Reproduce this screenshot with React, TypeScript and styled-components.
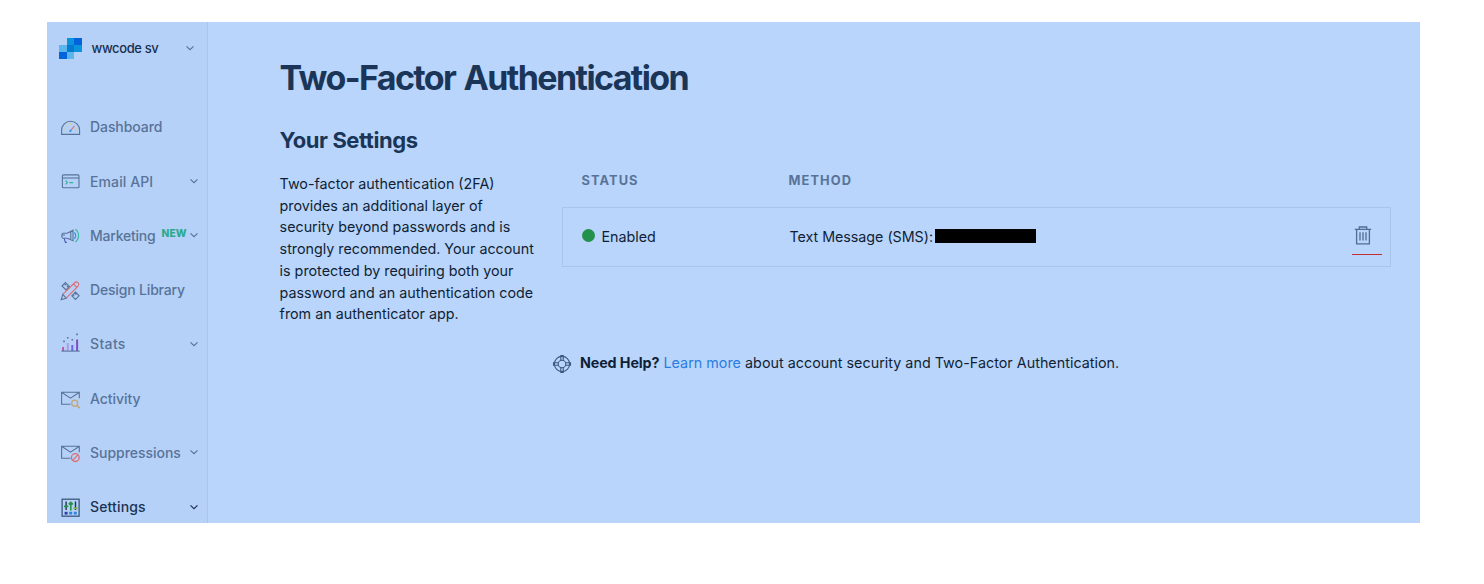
import React from "react";
import styled, { createGlobalStyle } from "styled-components";

const GlobalStyle = createGlobalStyle`
  * { box-sizing: border-box; }
  body { margin: 0; background: #fff; font-family: Inter, "Liberation Sans", sans-serif; }
  h1, h2, p { margin: 0; }
`;

const Page = styled.div`
  width: 1484px;
  height: 584px;
  padding: 22px 64px 61px 47px;
  overflow: hidden;
`;
const Shell = styled.div`
  display: flex;
  height: 501px;
  background: #b9d5fb;
`;
const Sidebar = styled.aside`
  flex: none;
  width: 161px;
  height: 100%;
  overflow: hidden;
  background: #b5d1f7;
  border-right: 1px solid #a8c5ee;
`;
const Account = styled.div`
  display: flex;
  align-items: center;
  height: 52px;
  padding-left: 12px;
  color: #1a2f50;
  svg { flex: none; }
`;
const AccountName = styled.span`
  width: 93.5px;
  margin-left: 9.5px;
  font-size: 13px;
  font-weight: 500;
  letter-spacing: -0.38px;
`;
const Nav = styled.nav`
  display: flex;
  flex-direction: column;
  padding-top: 25.8px;
`;
const NavItem = styled.div<{ $active?: boolean }>`
  display: flex;
  flex: none;
  align-items: center;
  height: 54.25px;
  padding-left: 13px;
  color: ${(p) => (p.$active ? "#1b3354" : "#587399")};
`;
const IconSlot = styled.span`
  display: flex;
  flex: none;
  width: 22px;
  margin-right: 8px;
  padding-top: 3px;
`;
const NavLabel = styled.span<{ $spacing: number }>`
  display: flex;
  flex: none;
  width: 99px;
  font-size: 14px;
  font-weight: 500;
  letter-spacing: ${(p) => p.$spacing}px;
  white-space: nowrap;
`;
const NewTag = styled.sup`
  margin: -0.5px 0 0 6px;
  color: #2fa98c;
  font-size: 10.2px;
  font-weight: 800;
  line-height: 15px;
  letter-spacing: 0.1px;
`;
const Main = styled.main`
  flex: 1;
  padding: 33px 29px 0 71.6px;
`;
const Title = styled.h1`
  color: #1a3558;
  font-size: 34px;
  font-weight: 700;
  line-height: 46px;
  letter-spacing: -1.6px;
  word-spacing: 1.7px;
`;
const Columns = styled.div`
  display: flex;
  margin-top: 21px;
`;
const Intro = styled.section`
  flex: none;
  width: 282.4px;
`;
const Subtitle = styled.h2`
  color: #1a3558;
  font-size: 22px;
  font-weight: 700;
  line-height: 36px;
  letter-spacing: -0.45px;
`;
const Description = styled.p`
  margin-top: 15px;
  color: #101f36;
  font-size: 14.3px;
  line-height: 21.7px;
  white-space: nowrap;
`;
const Methods = styled.section`
  flex: 1;
  padding-top: 48px;
`;
const HeaderRow = styled.div`
  display: grid;
  grid-template-columns: 207px 1fr;
  height: 37px;
  padding-left: 19.5px;
  color: #587399;
  font-size: 12.8px;
  font-weight: 700;
  line-height: 21px;
  letter-spacing: 1.1px;
`;
const MethodRow = styled.div`
  display: grid;
  grid-template-columns: 207px 1fr 30px;
  align-items: center;
  height: 60px;
  padding: 0 8px 2px 19.4px;
  border: 1px solid #a8c5ee;
  color: #101f36;
  font-size: 14.3px;
`;
const Status = styled.span`
  display: flex;
  align-items: center;
  gap: 6px;
`;
const Dot = styled.i`
  width: 13px;
  height: 13px;
  margin-top: -2px;
  border-radius: 50%;
  background: #23904c;
`;
const Method = styled.span`
  display: flex;
  align-items: center;
  letter-spacing: -0.03px;
`;
const Redacted = styled.span`
  width: 101px;
  height: 14px;
  margin: 0 0 0 2.4px;
  background: #000;
`;
const DeleteButton = styled.span`
  display: flex;
  justify-content: center;
  height: 30px;
  margin-top: 7px;
  padding: 1px 9px 0 0;
  border-bottom: 1px solid #c22f38;
`;
const Help = styled.p`
  display: flex;
  align-items: center;
  margin: 27px 0 0 273.2px;
  color: #101f36;
  font-size: 14.3px;
  line-height: 22px;
  letter-spacing: 0.03px;
  white-space: pre;
  svg { margin: 2px 8.2px 0 -1px; }
  b { font-weight: 700; letter-spacing: -0.1px; }
`;
const Link = styled.span`
  color: #2a7de1;
`;

const ink = "#587399";

function Chevron({ color = ink }: { color?: string }) {
  return (
    <svg width="10" height="10" viewBox="0 0 10 10" fill="none" stroke={color} strokeWidth="1.2">
      <path d="M1.5 3.4 5 6.6 8.5 3.4" />
    </svg>
  );
}

function Logo() {
  return (
    <svg width="23" height="22" viewBox="0 0 23 22" shapeRendering="crispEdges">
      <path fill="#0b93dd" d="M8 1h7v7H8zM15 8h8v7h-8z" />
      <path fill="#0263dc" d="M15 1h8v7h-8zM0 15h8v7H0z" />
      <path fill="#5bb6ee" d="M0 8h8v7H0zM8 15h7v7H8z" />
      <path fill="#057bcf" d="M8 8h7v7H8z" />
    </svg>
  );
}

const Icon = ({ children, color = ink }: { children: React.ReactNode; color?: string }) => (
  <svg width="21" height="21" viewBox="0 0 21 21" fill="none" stroke={color} strokeWidth="1.1" overflow="visible">
    {children}
  </svg>
);

const DashboardIcon = () => (
  <Icon>
    <path d="M1.6 16.4v-4.2a9 9 0 0 1 18 0v4.2z" />
    <path d="M10.6 5v1.5M6.4 6.8l.8.8M4.4 11h1.4M15.4 11h1.4M4.8 13.5h1M15.5 13.5h1" stroke="#d9c86f" />
    <path d="m10.5 12.7 4-4.7" stroke="#df6c6e" />
    <circle cx="10.4" cy="13" r=".9" fill="#3991e8" stroke="#3991e8" strokeWidth=".5" />
  </Icon>
);
const TerminalIcon = () => (
  <Icon>
    <rect x="2.4" y="2.9" width="16.6" height="12.8" rx="1" />
    <path d="M2.4 6h16.6" />
    <path d="m5.5 8.5 2 1.9-2 1.9M9.5 10.6H13" stroke="#35b197" />
  </Icon>
);
const MegaphoneIcon = () => (
  <Icon>
    <path d="M13 4.2v10.4L7.2 12.3H3.1c-1.7 0-1.7-5 0-5h4.1zM2 9h3M10.8 5v8.7" />
    <path d="m4.2 12.4 1.2 4h1.4" stroke="#4658ba" />
    <path d="M14.2 6.5c2 1.5 2 4.7 0 6.2" stroke="#308de2" />
    <path d="M15.3 3.2c4.5 3 4.2 9.6.1 13" stroke="#38b9a3" />
  </Icon>
);
const DesignIcon = () => (
  <Icon>
    <path d="m2 5 3.4-3.4 4 4-3.4 3.4zM6.4 2.6 4.7 4.3M8.4 4.6 7 6M11.8 14.8l3.7-3.7 3.6 3.7-3.6 3.7zM14.7 12l1.5 1.5M12.8 13.8l1.4 1.4" />
    <path d="m2.8 13.4 3.4 3.8-5 1.4z" />
    <path d="M2.8 13.4 14.9 1.5c2-1.7 5 .9 3.4 3.3L6.2 17.2M13.5 3l3.4 3.4" stroke="#dc6c70" />
  </Icon>
);
const StatsIcon = () => (
  <Icon>
    <path d="M3.1 16v-4" stroke="#b759a7" strokeWidth="2" />
    <path d="M7.8 16V8" stroke="#ad9bea" strokeWidth="2" />
    <path d="M12.3 16v-6" stroke="#6b67ed" strokeWidth="2" />
    <path d="M17.1 16V4.5" stroke="#7d4fbe" strokeWidth="2" />
    <path d="M1.4 16.1h18.3" />
    <path d="M3.2 6.4h1.6M6.9 2.8h1.6M11.5 4.7h1.6M16.2-.6h1.6" strokeWidth="1.6" />
  </Icon>
);
const Envelope = () => <path d="M10.5 15.2H1.6V3.2h17.7v6M1.9 3.5l8.6 5.6 8.5-5.6" />;
const ActivityIcon = () => (
  <Icon>
    <Envelope />
    <circle cx="14.7" cy="14.2" r="3" stroke="#c5a676" strokeWidth="1.3" />
    <path d="m17 16.4 2.7 2.7" stroke="#c5a676" strokeWidth="1.5" />
  </Icon>
);
const SuppressionsIcon = () => (
  <Icon>
    <Envelope />
    <circle cx="15.3" cy="14.6" r="3.9" stroke="#dc6c70" strokeWidth="1.3" />
    <path d="m12.6 17.3 5.4-5.4" stroke="#dc6c70" strokeWidth="1.2" />
  </Icon>
);
const SettingsIcon = () => (
  <Icon color="#3d587d">
    <rect x="2.1" y="1.2" width="17" height="17" strokeWidth="1.3" />
    <path d="M6.1 3.6v8.4M15.5 3.6v8.4" stroke="#1b3354" strokeWidth="1.4" />
    <path d="M10.8 4.5v8M4 8.4h4.3M8.7 6.4l2.1-2 2.1 2" stroke="#269349" strokeWidth="1.6" />
    <path d="M13.3 10.3h4.4" stroke="#8ab640" strokeWidth="1.7" />
    <path d="M4.6 15.2h3" stroke="#303fa7" strokeWidth="2.8" />
    <path d="M9.2 15.2h3M13.8 15.2h3" stroke="#3183dc" strokeWidth="2.8" />
  </Icon>
);
const TrashIcon = () => (
  <svg width="18" height="20" viewBox="0 0 18 20" fill="none" stroke="#526d92" strokeWidth="1.3">
    <path d="M.8 3.4h16.4M5.3 3.3V1h7.4v2.3M2.6 3.5v14.3h12.8V3.5M6 6.2v8.4M9 6.2v8.4M12 6.2v8.4" />
  </svg>
);
const HelpIcon = () => (
  <svg width="20" height="20" viewBox="0 0 20 20" fill="none" stroke="#3d587d" strokeWidth="1.1">
    <circle cx="10" cy="10" r="7.6" />
    <circle cx="10" cy="10" r="3.8" />
    <path d="M8.8 6.3V1.5h2.4v4.8M8.8 13.7v4.8h2.4v-4.8M6.3 8.8H1.5v2.4h4.8M13.7 8.8h4.8v2.4h-4.8" />
  </svg>
);

const items = [
  { label: "Dashboard", icon: <DashboardIcon />, spacing: -0.08 },
  { label: "Email API", icon: <TerminalIcon />, spacing: 0.1, menu: true },
  { label: "Marketing", icon: <MegaphoneIcon />, spacing: -0.22, menu: true, isNew: true },
  { label: "Design Library", icon: <DesignIcon />, spacing: -0.17 },
  { label: "Stats", icon: <StatsIcon />, spacing: 0.35, menu: true },
  { label: "Activity", icon: <ActivityIcon />, spacing: -0.05 },
  { label: "Suppressions", icon: <SuppressionsIcon />, spacing: -0.03, menu: true },
  { label: "Settings", icon: <SettingsIcon />, spacing: 0.15, menu: true, active: true },
];

const description = [
  "Two-factor authentication (2FA)",
  "provides an additional layer of",
  "security beyond passwords and is",
  "strongly recommended. Your account",
  "is protected by requiring both your",
  "password and an authentication code",
  "from an authenticator app.",
];

export default function App() {
  return (
    <Page>
      <GlobalStyle />
      <Shell>
        <Sidebar>
          <Account>
            <Logo />
            <AccountName>wwcode sv</AccountName>
            <Chevron />
          </Account>
          <Nav>
            {items.map((item) => (
              <NavItem key={item.label} $active={item.active}>
                <IconSlot>{item.icon}</IconSlot>
                <NavLabel $spacing={item.spacing}>
                  {item.label}
                  {item.isNew && <NewTag>NEW</NewTag>}
                </NavLabel>
                {item.menu && <Chevron color={item.active ? "#1b3354" : ink} />}
              </NavItem>
            ))}
          </Nav>
        </Sidebar>
        <Main>
          <Title>Two-Factor Authentication</Title>
          <Columns>
            <Intro>
              <Subtitle>Your Settings</Subtitle>
              <Description>
                {description.map((line) => (
                  <React.Fragment key={line}>
                    {line}
                    <br />
                  </React.Fragment>
                ))}
              </Description>
            </Intro>
            <Methods>
              <HeaderRow>
                <span>STATUS</span>
                <span>METHOD</span>
              </HeaderRow>
              <MethodRow>
                <Status>
                  <Dot />
                  Enabled
                </Status>
                <Method>
                  Text Message (SMS):
                  <Redacted />
                </Method>
                <DeleteButton>
                  <TrashIcon />
                </DeleteButton>
              </MethodRow>
            </Methods>
          </Columns>
          <Help>
            <HelpIcon />
            <span>
              <b>Need Help?</b> <Link>Learn more</Link> about account security and Two-Factor Authentication.
            </span>
          </Help>
        </Main>
      </Shell>
    </Page>
  );
}
